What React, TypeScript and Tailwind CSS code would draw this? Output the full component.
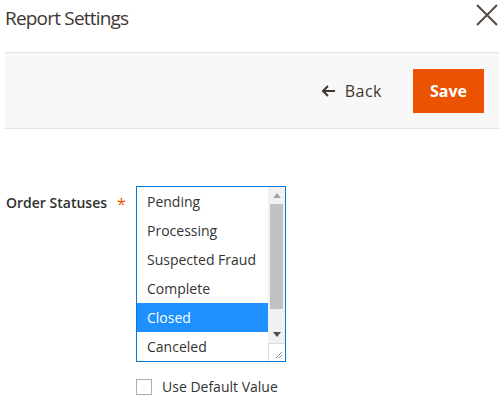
import React from 'react';

const statuses = ['Pending', 'Processing', 'Suspected Fraud', 'Complete', 'Closed', 'Canceled'];

const App = () => {
  return (
    <div className="w-[504px] h-[400px] bg-white overflow-hidden font-['Open_Sans',sans-serif] text-[#333]">
      {/* Header */}
      <div className="h-[52px] flex items-start justify-between pl-[5px] pr-[6px]">
        <h1 className="text-[19px] leading-[36px] text-[#41362f] font-normal tracking-[-0.8px]">Report Settings</h1>
        <svg width="22" height="22" viewBox="0 0 22 22" className="mt-[4px]">
          <path d="M1 1 L21 21 M21 1 L1 21" stroke="#514943" strokeWidth="2" />
        </svg>
      </div>

      {/* Action bar */}
      <div className="mx-[5px] h-[77px] bg-[#f8f8f8] border-y border-[#e3e3e3] flex items-center justify-end pr-[15px]">
        <button className="flex items-center gap-[9px] text-[16px] text-[#41362f] mr-[31px] tracking-[0.5px]">
          <svg width="14" height="12" viewBox="0 0 14 12">
            <path d="M6 1 L1 6 L6 11 M1 6 H13" stroke="#41362f" strokeWidth="2" fill="none" />
          </svg>
          Back
        </button>
        <button className="w-[71px] h-[44px] bg-[#eb5202] text-white font-bold text-[16px]">Save</button>
      </div>

      {/* Form */}
      <div className="flex mt-[57px]">
        <div className="w-[136px] flex pl-[6px] pt-[6px]">
          <span className="text-[14px] font-semibold text-[#303030]">Order Statuses</span>
          <span className="text-[#eb5202] ml-[10px] text-[16px] leading-[24px]">*</span>
        </div>
        <div className="flex flex-col">
          <div className="w-[150px] h-[176px] border border-[#007bdb] flex overflow-hidden">
            <div className="flex-1 flex flex-col">
              {statuses.map((s) => (
                <div
                  key={s}
                  className={
                    s === 'Closed'
                      ? 'h-[29px] shrink-0 flex items-center pl-[10px] text-[14px] bg-[#1e90ff] text-white'
                      : 'h-[29px] shrink-0 flex items-center pl-[10px] text-[14px] text-[#333]'
                  }
                >
                  {s}
                </div>
              ))}
            </div>
            <div className="w-[17px] flex flex-col bg-[#f1f1f1]">
              <div className="h-[17px] flex items-center justify-center">
                <svg width="8" height="5" viewBox="0 0 8 5">
                  <path d="M0 5 L4 0 L8 5 Z" fill="#a3a3a3" />
                </svg>
              </div>
              <div className="mx-[2px] h-[105px] bg-[#c1c1c1]" />
              <div className="flex-1" />
              <div className="h-[17px] flex items-center justify-center">
                <svg width="8" height="5" viewBox="0 0 8 5">
                  <path d="M0 0 L8 0 L4 5 Z" fill="#505050" />
                </svg>
              </div>
              <div className="h-[18px] bg-white border-t border-l border-[#dcdcdc] relative">
                <svg width="8" height="8" viewBox="0 0 8 8" className="absolute right-[2px] bottom-[2px]">
                  <path d="M1 7 L7 1 M4 7 L7 4" stroke="#8a8a8a" strokeWidth="1" />
                </svg>
              </div>
            </div>
          </div>
          <label className="flex items-center mt-[14px]">
            <span className="w-[16px] h-[16px] border border-[#adadad] bg-white" />
            <span className="ml-[10px] text-[14px] text-[#333]">Use Default Value</span>
          </label>
        </div>
      </div>
    </div>
  );
};

export default App;
